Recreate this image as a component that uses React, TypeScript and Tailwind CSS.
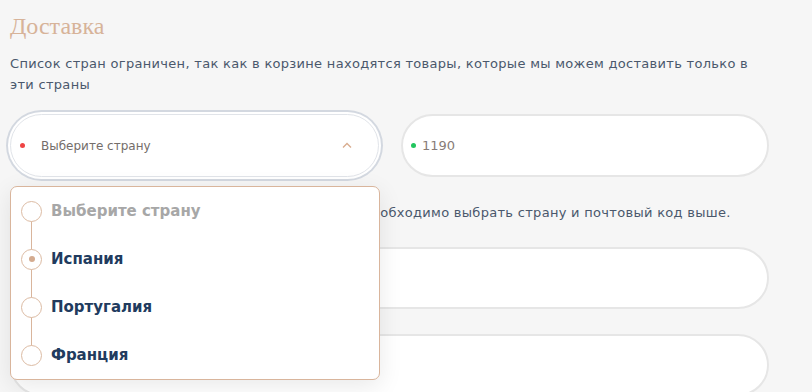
import { useState } from "react";

const options = [
  { name: "Выберите страну", placeholder: true },
  { name: "Испания", selected: true },
  { name: "Португалия" },
  { name: "Франция" },
];

function CountrySelect() {
  const [open] = useState(true);

  return (
    <div className="relative">
      <div className="flex h-[63px] items-center rounded-full border border-[#e1e4e9] bg-white pl-[9px] pr-[26px] shadow-[0_0_0_2px_#ffffff,0_0_0_4px_#d3d8e0]">
        <span className="h-[5px] w-[5px] rounded-full bg-[#ef4444]" />
        <span className="ml-[16px] flex-1 text-[12px] text-[#746d6a]">Выберите страну</span>
        <svg width="10" height="7" viewBox="0 0 10 7" fill="none">
          <polyline points="1,5.5 5,1.5 9,5.5" stroke="#d8ac8e" strokeWidth="1.3" />
        </svg>
      </div>

      {open && (
        <div className="absolute left-0 top-[72px] z-20 w-[370px] rounded-[7px] border border-[#d9b59c] bg-white shadow-[0_6px_24px_rgba(0,0,0,0.09)]">
          <div className="relative">
            <div className="absolute left-[20px] top-[24px] bottom-[24px] w-px bg-[#d9b59c]" />
            {options.map((opt) => (
              <div key={opt.name} className="relative flex h-[48px] items-center pl-[10px]">
                <span className="z-10 flex h-[21px] w-[21px] items-center justify-center rounded-full border border-[#dcbba3] bg-white">
                  {opt.selected && <span className="h-[6px] w-[6px] rounded-full bg-[#d4ab8f]" />}
                </span>
                <span
                  className={`ml-[9px] text-[15px] font-bold ${opt.placeholder ? "text-[#a7a7a7]" : "text-[#213b5e]"}`}
                >
                  {opt.name}
                </span>
              </div>
            ))}
          </div>
        </div>
      )}
    </div>
  );
}

export default function App() {
  return (
    <div className="h-[392px] w-[812px] overflow-hidden bg-[#f6f6f6] px-[10px] pt-[11px] font-['DejaVu_Sans',sans-serif]">
      <h2 className="font-['Liberation_Serif',serif] text-[24px] leading-[30px] text-[#d7b399]">Доставка</h2>
      <p className="mt-[12px] w-[770px] text-[13px] leading-[21px] tracking-[0.3px] text-[#4a586c]">
        Список стран ограничен, так как в корзине находятся товары, которые мы можем доставить только в
        <br />
        эти страны
      </p>

      <div className="mt-[19px] grid w-[759px] grid-cols-[369px_368px] gap-[22px]">
        <CountrySelect />
        <div className="flex h-[63px] items-center rounded-full border-2 border-[#e6e6e6] bg-white pl-[8px]">
          <span className="h-[5px] w-[5px] rounded-full bg-[#22c55e]" />
          <span className="ml-[6px] text-[13px] text-[#877c77]">1190</span>
        </div>
      </div>

      <p className="mt-[25px] text-[13px] leading-[21px] tracking-[0.3px] text-[#4a586c]">
        Для того чтобы рассчитать стоимость доставки, необходимо выбрать страну и почтовый код выше.
      </p>

      <div className="mt-[24px] h-[62px] w-[759px] rounded-full border-2 border-[#e6e6e6] bg-white" />
      <div className="mt-[25px] h-[62px] w-[759px] rounded-full border-2 border-[#e6e6e6] bg-white" />
    </div>
  );
}
